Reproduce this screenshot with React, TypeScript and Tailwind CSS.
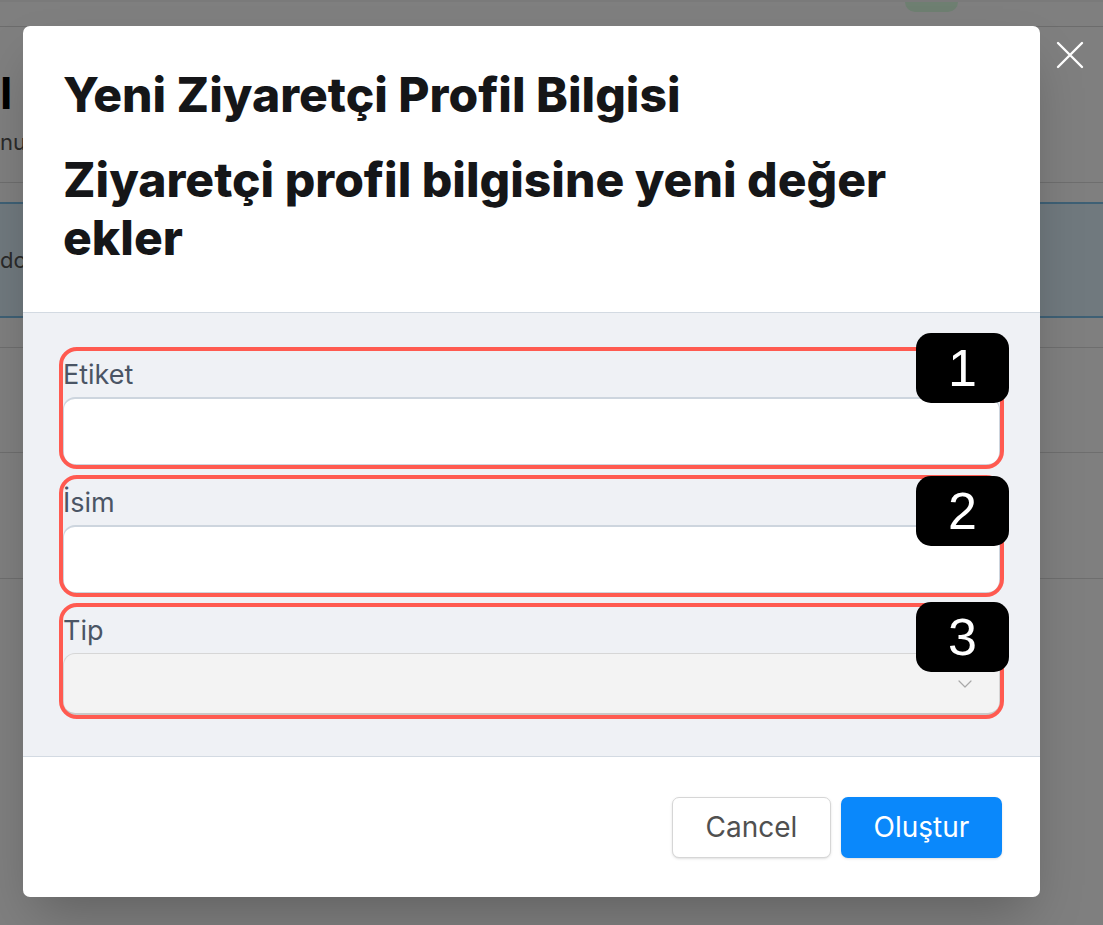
import { ChevronDown } from "lucide-react";

const FIELDS = [
  { label: "Etiket", badge: "1", kind: "input", badgeTop: "-top-[18px]" },
  { label: "İsim", badge: "2", kind: "input", badgeTop: "-top-[3px]" },
  { label: "Tip", badge: "3", kind: "select", badgeTop: "-top-[5px]" },
];

const font = "font-['Inter','Noto_Sans',sans-serif]";

function BackgroundPage() {
  // the page that sits behind the dialog, only the edges show
  return (
    <div className="flex flex-col">
      <div className="h-[27px] border-b border-[#d9d9d9] border-t-2 border-t-[#f4f4f4] flex">
        <div className="ml-[905px] w-[53px] h-[10px] rounded-b-[10px] bg-[#dcffe2]" />
      </div>
      <div className="h-[156px] border-b border-[#dcdcdc] pt-[44px]">
        <p className="font-['Inter',sans-serif] text-[44px] leading-[44px] font-bold text-black tracking-[4px]">I I</p>
        <p className="font-['Inter',sans-serif] text-[22px] leading-[30px] text-[#555] mt-[12px]">nu</p>
      </div>
      <div className="mt-[19px] h-[116px] bg-[#e0f2fc] border-y-2 border-[#7cc0ea] flex items-center">
        <p className="font-['Inter',sans-serif] text-[22px] text-[#555]">dc</p>
      </div>
      <div className="h-[30px] border-b border-[#dcdcdc]" />
      <div className="h-[105px] border-b border-[#dcdcdc]" />
      <div className="h-[126px] border-b border-[#dcdcdc]" />
      <div className="h-[347px]" />
    </div>
  );
}

export default function App() {
  return (
    <div className="relative w-full h-[925px] overflow-hidden bg-white">
      <BackgroundPage />
      <div className="absolute inset-0 bg-black/50" />

      {/* close */}
      <button className="absolute left-[1055px] top-[40px] w-[30px] h-[30px] flex items-center justify-center">
        <svg width="28" height="28" viewBox="0 0 28 28" fill="none">
          <path d="M2 2 L26 26 M26 2 L2 26" stroke="white" strokeWidth="2.4" strokeLinecap="round" />
        </svg>
      </button>

      {/* dialog */}
      <div className={`absolute left-[23px] top-[26px] w-[1017px] rounded-[7px] bg-white shadow-2xl overflow-hidden flex flex-col ${font}`}>
        <div className="px-10 pt-[40px] pb-[45px] border-b border-[#d3dae2]">
          <h2 className="text-[48px] leading-[58px] font-extrabold text-[#151618]">
            Yeni Ziyaretçi Profil Bilgisi
          </h2>
          <p className="mt-[27px] text-[48px] leading-[58px] font-extrabold text-[#151618]">
            Ziyaretçi profil bilgisine yeni değer
            <br />
            ekler
          </p>
        </div>

        <div className="bg-[#eff1f5] px-10 pt-[38px] pb-[41px] border-b border-[#d3dae2] flex flex-col gap-[14px]">
          {FIELDS.map((f) => (
            <div key={f.label} className="relative flex flex-col">
              <label className="h-[46px] leading-[48px] text-[27px] text-[#4b5565]">{f.label}</label>
              {f.kind === "input" ? (
                <input className="h-[68px] w-full rounded-[12px] border border-[#cdd5de] border-t-2 bg-white px-4 outline-none" />
              ) : (
                <div className="h-[62px] w-full rounded-[12px] border border-[#d6d6d6] border-b-2 border-b-[#c9c9c9] bg-[#f3f3f3] flex items-center justify-end pr-[22px]">
                  <ChevronDown size={24} strokeWidth={1.2} className="text-[#a8a8a8]" />
                </div>
              )}
              {/* annotation */}
              <div className="pointer-events-none absolute -inset-[4px] rounded-[18px] border-[4px] border-[#ff5a50]" />
              <div
                className={`absolute -right-[9px] ${f.badgeTop} w-[93px] h-[70px] rounded-[15px] bg-black flex items-center justify-center font-['Liberation_Sans','Arial',sans-serif] text-[52px] leading-none text-white`}
              >
                {f.badge}
              </div>
            </div>
          ))}
        </div>

        <div className="h-[140px] flex items-center justify-end gap-[10px] pr-[38px]">
          <button className="w-[159px] h-[61px] rounded-[7px] border border-[#d6d6d6] bg-white text-[28px] text-[#505050] shadow-sm">
            Cancel
          </button>
          <button className="w-[161px] h-[61px] rounded-[7px] bg-[#0a88fb] text-[28px] text-white shadow-sm">
            Oluştur
          </button>
        </div>
      </div>
    </div>
  );
}
